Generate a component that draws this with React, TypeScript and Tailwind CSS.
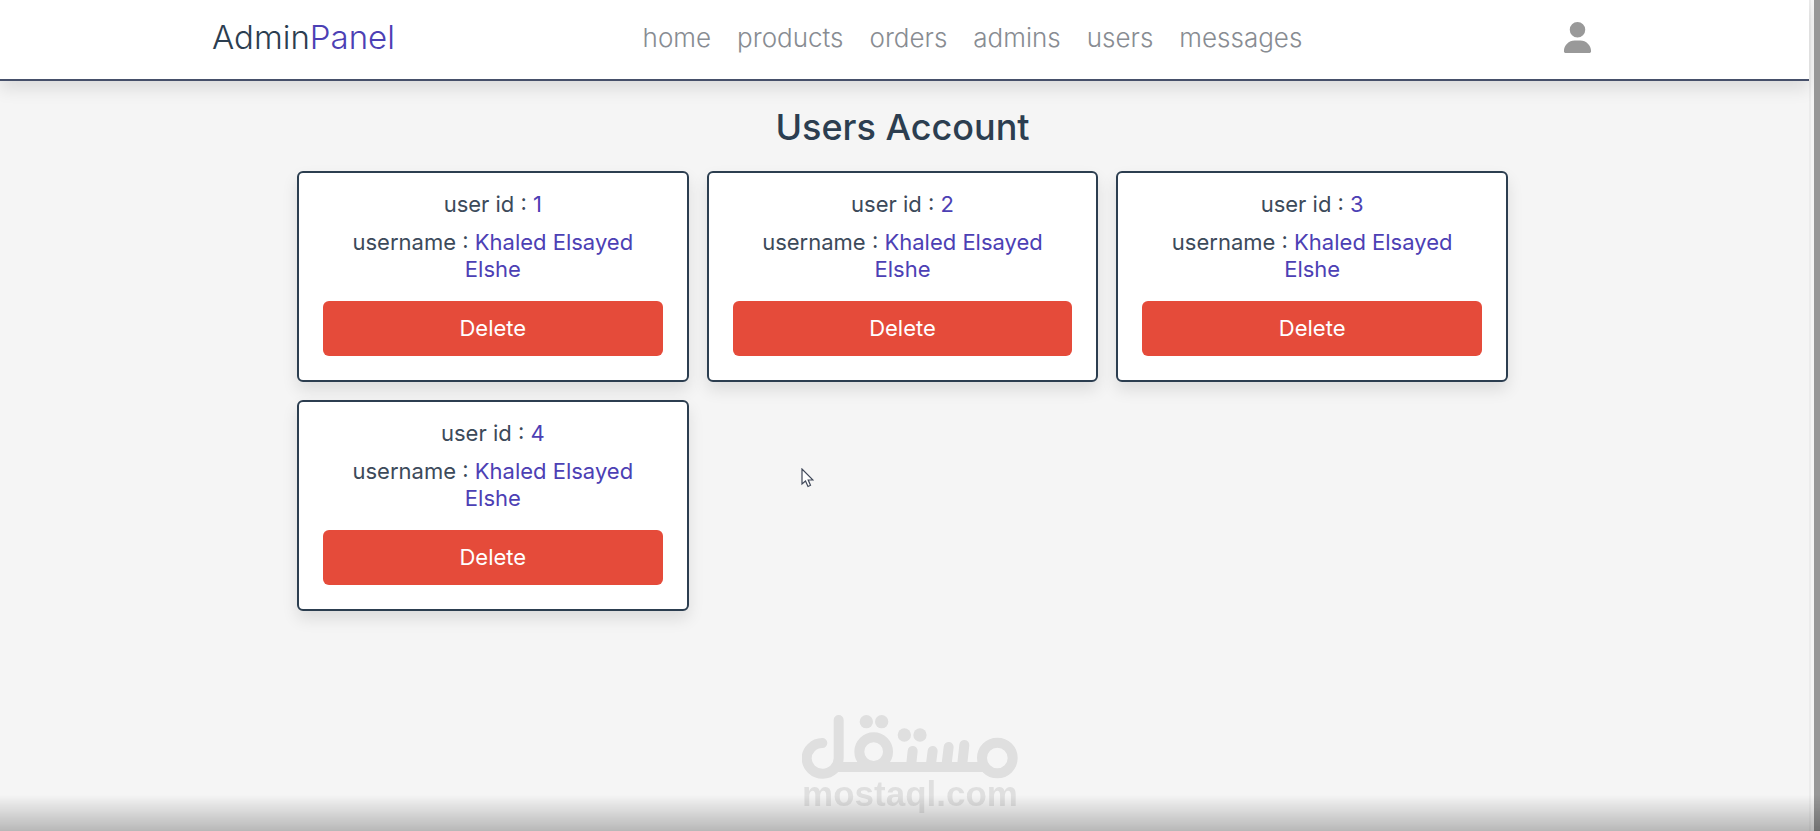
import { useState } from 'react';
import { FaUser } from 'react-icons/fa6';

const links = ['home', 'products', 'orders', 'admins', 'users', 'messages'];

const accounts = [
  { id: 1, name: 'Khaled Elsayed Elshe' },
  { id: 2, name: 'Khaled Elsayed Elshe' },
  { id: 3, name: 'Khaled Elsayed Elshe' },
  { id: 4, name: 'Khaled Elsayed Elshe' },
];

function Header() {
  return (
    <header className="bg-white border-b-2 border-[#46506a] pr-1 shadow-[0_8px_16px_rgba(0,0,0,0.1)]">
      <div className="mx-auto flex h-[79px] w-full max-w-[1381px] items-center justify-between pb-1">
        <a href="#home" className="text-[33px] font-light text-[#2c3e50]">
          Admin<span className="text-[#4c40b4]">Panel</span>
        </a>
        <nav className="flex gap-[26px]">
          {links.map(link => (
            <a key={link} href={`#${link}`} className="text-[26px] font-light text-[#888c92]">
              {link}
            </a>
          ))}
        </nav>
        <button type="button" aria-label="Profile" className="pl-3 text-[#999999]">
          <FaUser size={31} />
        </button>
      </div>
    </header>
  );
}

function Watermark() {
  return (
    <div className="pointer-events-none fixed inset-x-0 bottom-0 flex flex-col items-center pb-[22px] text-black opacity-[0.085]">
      <svg width="216" height="64" viewBox="66 72 648 192" fill="none" stroke="currentColor" strokeWidth="30" aria-label="مستقل" role="img">
        <circle cx="652" cy="201" r="46" />
        <path d="M170 228H620" />
        <circle cx="281" cy="182" r="43" />
        <path d="M176 87V202A48 46 0 1 1 127 156" strokeLinecap="round" />
        <path d="M398 180L393 226M458 180L452 226M506 168L499 226M553 162L546 226" strokeLinecap="round" />
        <g fill="currentColor" stroke="none">
          <circle cx="259" cy="92" r="20" />
          <circle cx="305" cy="92" r="20" />
          <circle cx="373" cy="132" r="20" />
          <circle cx="420" cy="132" r="20" />
        </g>
      </svg>
      <span className="font-['Liberation_Sans',sans-serif] text-[35px] font-bold leading-[30px]">mostaql.com</span>
    </div>
  );
}

export default function App() {
  const [users, setUsers] = useState(accounts);

  const handleDelete = (id: number) => {
    setUsers(users.filter(u => u.id !== id));
  };

  return (
    <div className="flex min-h-screen bg-[#f5f5f5] font-['Inter',sans-serif] text-[#2c3e50]">
      <div className="mr-[3px] flex-1 border-r-2 border-[#ececec]">
        <Header />

        <div className="pr-1">
          <main className="mx-auto w-full max-w-[1211px] pt-6">
            <h1 className="text-center text-[36px] font-medium leading-[44px]">Users Account</h1>
            <div className="mt-[22px] grid grid-cols-3 gap-[18px]">
              {users.map(user => (
                <div key={user.id} className="rounded-md border-2 border-[#2c3e50] bg-white px-6 pt-[18px] pb-6 text-center text-[22px] leading-[27px] shadow-[0_8px_16px_rgba(0,0,0,0.1)]">
                  <p className="text-[#3c4a5a]">
                    user id : <span className="text-[#4c40b4]">{user.id}</span>
                  </p>
                  <p className="mt-[11px] px-5 text-[#3c4a5a]">
                    username : <span className="text-[#4c40b4]">{user.name}</span>
                  </p>
                  <button
                    type="button"
                    onClick={() => handleDelete(user.id)}
                    className="mt-[18px] h-[55px] w-full rounded-md bg-[#e54b3a] text-white"
                  >
                    Delete
                  </button>
                </div>
              ))}
            </div>
          </main>
        </div>
      </div>
      <div className="w-1.5 bg-[#979797]" />

      <div className="pointer-events-none fixed inset-x-0 bottom-0 h-9 bg-linear-to-b from-transparent to-black/25" />
      <Watermark />

      {/* mouse pointer */}
      <svg className="pointer-events-none absolute left-[801px] top-[468px]" width="13" height="20" viewBox="0 0 13 20">
        <path d="M1 1V16L4.500 13L7 18.500L9.500 17.300L7.200 12H12Z" fill="#fff" stroke="#3f4758" strokeWidth="1.200" />
      </svg>
    </div>
  );
}
